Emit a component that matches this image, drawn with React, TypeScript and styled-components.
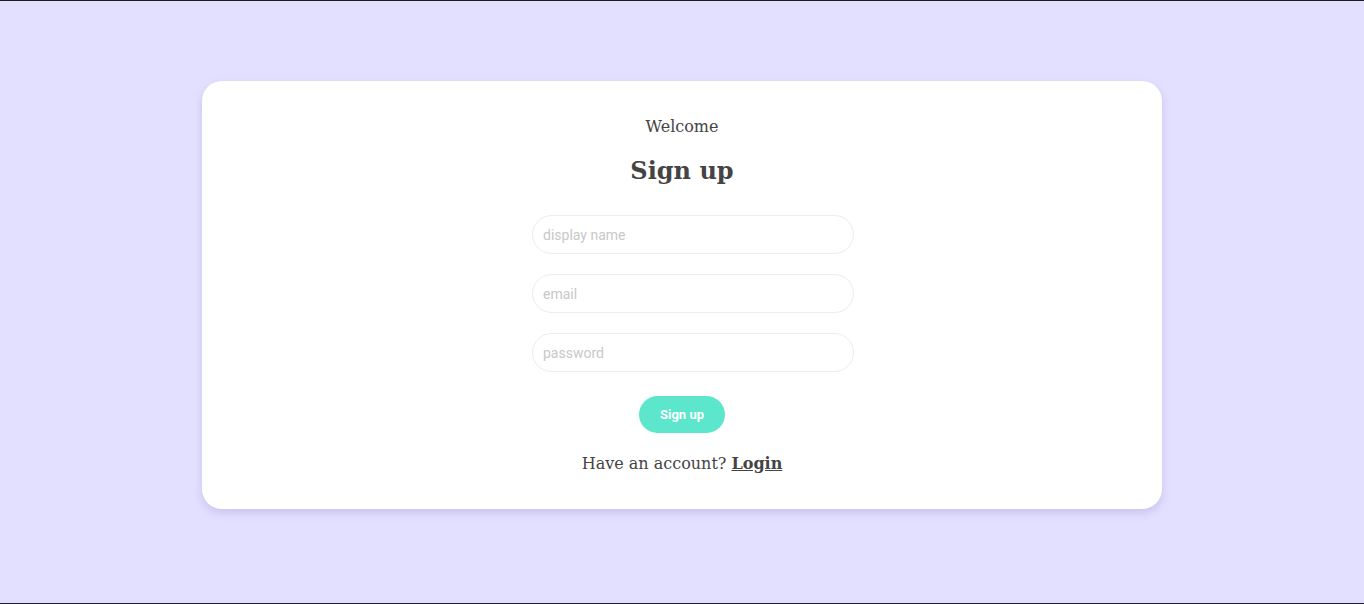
import React from "react";
import styled, { createGlobalStyle } from "styled-components";

const Global = createGlobalStyle`
  html, body { margin: 0; padding: 0; }
  body { background: #e3e0ff; font-family: "DejaVu Serif", serif; }
  * { box-sizing: border-box; }
`;

const Page = styled.div`
  height: 604px;
  border-top: 1px solid #1c1c24;
  border-bottom: 1px solid #1c1c24;
  background: #e3e0ff;
  display: flex;
  justify-content: center;
  padding-top: 80px;
`;

const Card = styled.div`
  width: 960px;
  height: 428px;
  background: #ffffff;
  border-radius: 20px;
  box-shadow: 0 4px 10px rgba(120, 110, 190, 0.25);
  display: flex;
  flex-direction: column;
  align-items: center;
  padding-top: 36px;
`;

const Welcome = styled.div`
  font-family: "DejaVu Serif", serif;
  font-size: 16px;
  color: #444;
  line-height: 20px;
`;

const Title = styled.h1`
  font-family: "DejaVu Serif", serif;
  font-size: 24px;
  font-weight: bold;
  color: #444;
  margin: 19px 0 29px;
  line-height: 30px;
`;

const Form = styled.form`
  display: flex;
  flex-direction: column;
  align-items: center;
  gap: 20px;
`;

const Input = styled.input`
  width: 322px;
  height: 39px;
  margin-left: 22px;
  border: 1px solid #ececec;
  border-radius: 20px;
  padding: 0 10px;
  font-family: Roboto, sans-serif;
  font-size: 14px;
  color: #444;
  outline: none;
  &::placeholder { color: #c8c8c8; }
`;

const Button = styled.button`
  margin-top: 4px;
  width: 86px;
  height: 37px;
  border: none;
  border-radius: 20px;
  background: #5ce6cc;
  color: #fff;
  font-family: Roboto, sans-serif;
  font-weight: bold;
  font-size: 13px;
`;

const Footer = styled.p`
  font-family: "DejaVu Serif", serif;
  font-size: 16px;
  color: #444;
  margin: 21px 0 0;
`;

const LoginLink = styled.a`
  font-weight: bold;
  color: #444;
  text-decoration: underline;
`;

export default function App() {
  return (
    <>
      <Global />
      <Page>
        <Card>
          <Welcome>Welcome</Welcome>
          <Title>Sign up</Title>
          <Form onSubmit={(e) => e.preventDefault()}>
            <Input type="text" placeholder="display name" />
            <Input type="email" placeholder="email" />
            <Input type="password" placeholder="password" />
            <Button type="submit">Sign up</Button>
          </Form>
          <Footer>
            Have an account? <LoginLink href="#">Login</LoginLink>
          </Footer>
        </Card>
      </Page>
    </>
  );
}
